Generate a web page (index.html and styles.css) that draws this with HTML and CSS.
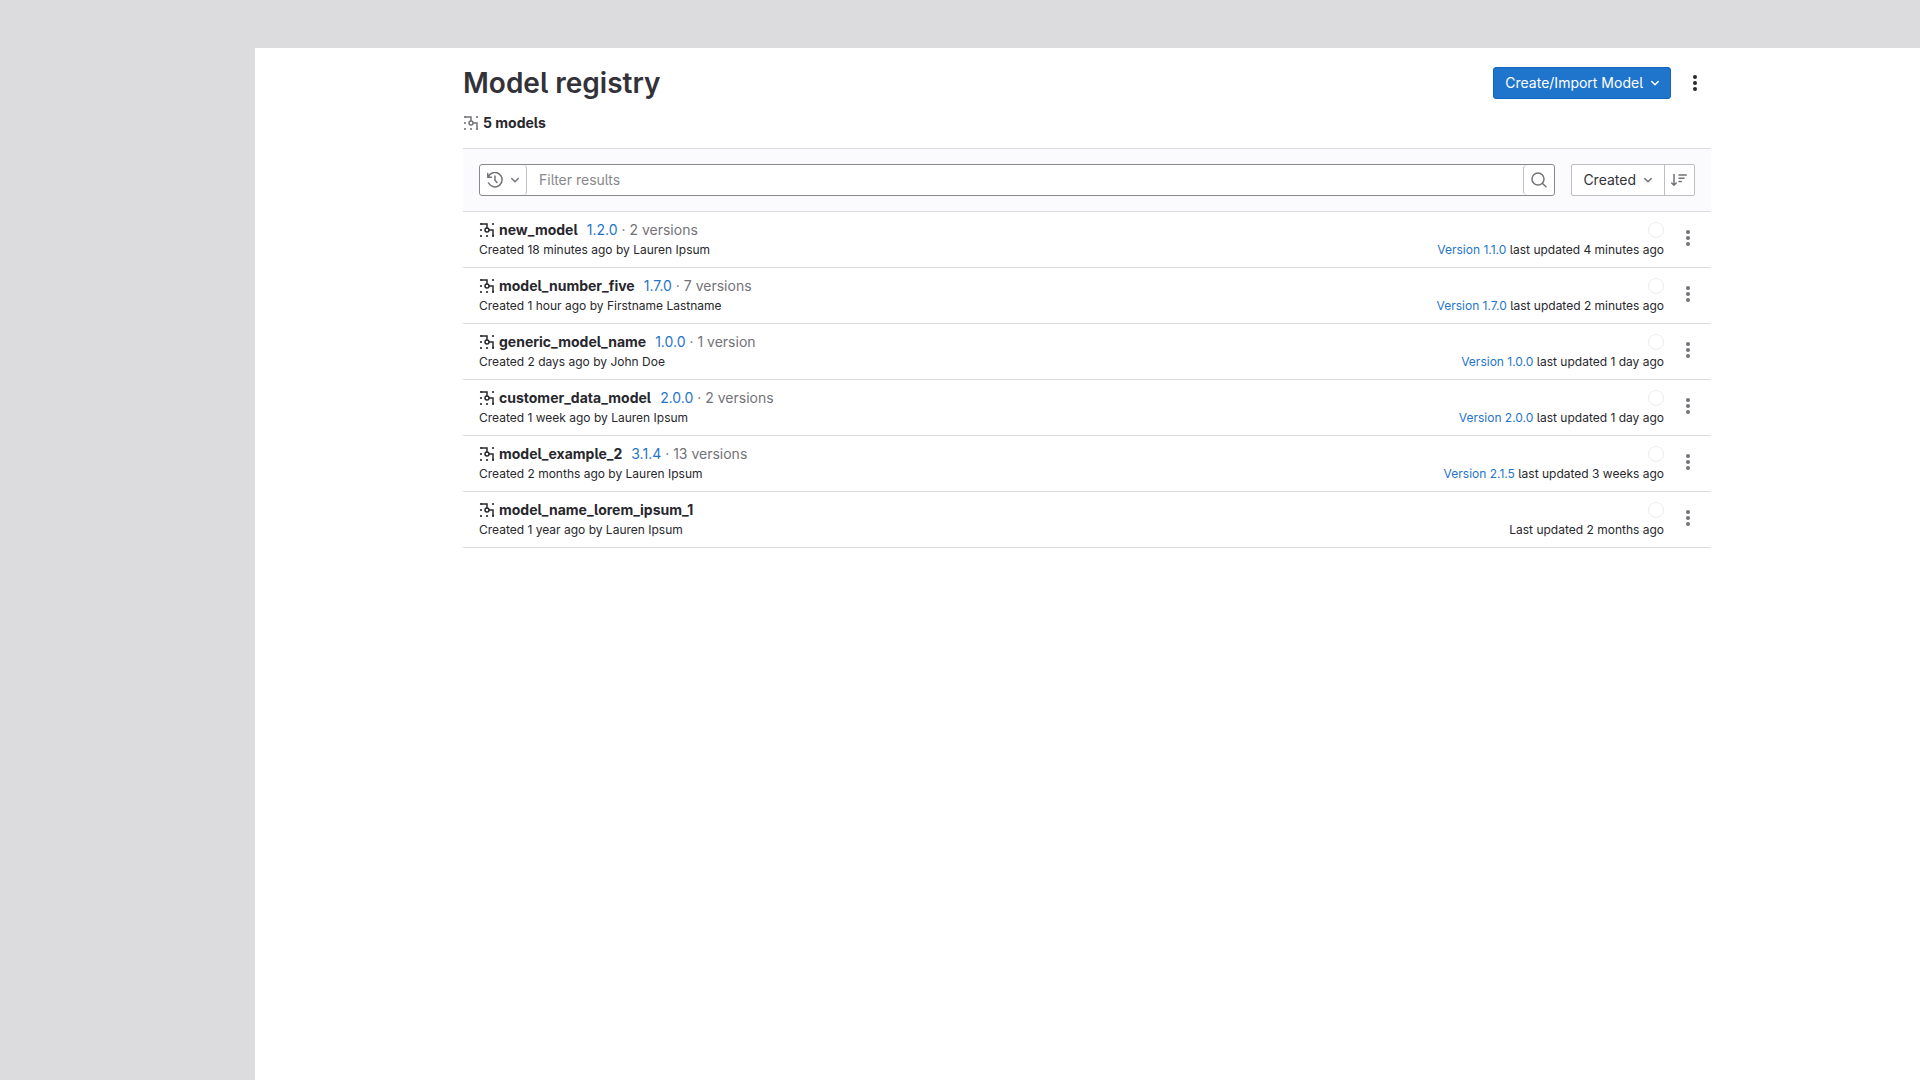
FILE: index.html
```html
<!DOCTYPE html>
<html lang="en">

<head>
    <meta charset="UTF-8">
    <meta name="viewport" content="width=device-width, initial-scale=1.0">
    <title>Model registry</title>
    <link rel="stylesheet" href="styles.css">
</head>

<body>
    <svg class="sprite" aria-hidden="true">
        <symbol id="model" viewBox="0 0 16 16">
            <path d="M2 1.9h6V6M10 8h4v6" fill="none" stroke="currentColor" stroke-width="1.5" />
            <circle cx="8" cy="8" r="2" fill="none" stroke="currentColor" stroke-width="1.5" />
            <g fill="currentColor">
                <circle cx="2" cy="2" r="1.1" />
                <circle cx="14" cy="2" r="1.1" />
                <circle cx="2" cy="8" r="1.1" />
                <circle cx="2" cy="14" r="1.1" />
                <circle cx="8" cy="14" r="1.1" />
                <circle cx="14" cy="14" r="1.1" />
            </g>
        </symbol>
        <symbol id="chevron" viewBox="0 0 16 16">
            <path d="M4.75 6.5 8 9.75l3.25-3.25" fill="none" stroke="currentColor" stroke-width="1.5" stroke-linecap="round" stroke-linejoin="round" />
        </symbol>
        <symbol id="dots" viewBox="0 0 16 16">
            <g fill="currentColor">
                <circle cx="8" cy="2" r="2" />
                <circle cx="8" cy="8" r="2" />
                <circle cx="8" cy="14" r="2" />
            </g>
        </symbol>
        <symbol id="history" viewBox="0 0 16 16">
            <path d="M.75 1.5v3.75H4.5M1.2 5A7.2 7.2 0 1 1 1.5 11M8 4v4.2l2 2.3" fill="none" stroke="currentColor" stroke-width="1.5" stroke-linecap="round" stroke-linejoin="round" />
        </symbol>
        <symbol id="search" viewBox="0 0 16 16">
            <path d="M13 7A6 6 0 1 1 1 7a6 6 0 0 1 12 0zM11.5 11.5l3.5 3.25" fill="none" stroke="currentColor" stroke-width="1.5" stroke-linecap="round" />
        </symbol>
        <symbol id="sort" viewBox="0 0 16 16">
            <path d="M3 2.5v10.75M.75 11 3 13.25 5.25 11M8 3h7.25M8 6.25h5M8 9.5h2.25" fill="none" stroke="currentColor" stroke-width="1.5" stroke-linecap="round" stroke-linejoin="round" />
        </symbol>
    </svg>

    <div id="app">
        <main>
            <div class="container">
                <header class="title-bar">
                    <h1>Model registry</h1>
                    <button class="btn btn-confirm">Create/Import Model <svg class="icon"><use href="#chevron" /></svg></button>
                    <button class="more" aria-label="More actions"><svg class="icon"><use href="#dots" /></svg></button>
                </header>
                <p class="count"><svg class="icon"><use href="#model" /></svg>5 models</p>

                <div class="toolbar">
                    <form class="filter">
                        <button type="button" class="history" aria-label="Recent searches">
                            <svg class="icon"><use href="#history" /></svg>
                            <svg class="icon"><use href="#chevron" /></svg>
                        </button>
                        <input type="text" placeholder="Filter results" aria-label="Filter results">
                        <button type="button" class="search" aria-label="Search"><svg class="icon"><use href="#search" /></svg></button>
                    </form>
                    <div class="sorting">
                        <button class="sort-by">Created <svg class="icon"><use href="#chevron" /></svg></button>
                        <button class="sort-dir" aria-label="Sort direction"><svg class="icon"><use href="#sort" /></svg></button>
                    </div>
                </div>

                <ul class="models">
                    <li>
                        <div class="info">
                            <div class="name"><svg class="icon"><use href="#model" /></svg><b>new_model</b><span><a href="#">1.2.0</a> · 2 versions</span></div>
                            <div class="meta">Created 18 minutes ago by Lauren Ipsum</div>
                        </div>
                        <div class="updated">
                            <span class="avatar"></span>
                            <div class="meta"><a href="#">Version 1.1.0</a> last updated 4 minutes ago</div>
                        </div>
                        <button class="row-more" aria-label="Actions"><svg class="icon"><use href="#dots" /></svg></button>
                    </li>
                    <li>
                        <div class="info">
                            <div class="name"><svg class="icon"><use href="#model" /></svg><b>model_number_five</b><span><a href="#">1.7.0</a> · 7 versions</span></div>
                            <div class="meta">Created 1 hour ago by Firstname Lastname</div>
                        </div>
                        <div class="updated">
                            <span class="avatar"></span>
                            <div class="meta"><a href="#">Version 1.7.0</a> last updated 2 minutes ago</div>
                        </div>
                        <button class="row-more" aria-label="Actions"><svg class="icon"><use href="#dots" /></svg></button>
                    </li>
                    <li>
                        <div class="info">
                            <div class="name"><svg class="icon"><use href="#model" /></svg><b>generic_model_name</b><span><a href="#">1.0.0</a> · 1 version</span></div>
                            <div class="meta">Created 2 days ago by John Doe</div>
                        </div>
                        <div class="updated">
                            <span class="avatar"></span>
                            <div class="meta"><a href="#">Version 1.0.0</a> last updated 1 day ago</div>
                        </div>
                        <button class="row-more" aria-label="Actions"><svg class="icon"><use href="#dots" /></svg></button>
                    </li>
                    <li>
                        <div class="info">
                            <div class="name"><svg class="icon"><use href="#model" /></svg><b>customer_data_model</b><span><a href="#">2.0.0</a> · 2 versions</span></div>
                            <div class="meta">Created 1 week ago by Lauren Ipsum</div>
                        </div>
                        <div class="updated">
                            <span class="avatar"></span>
                            <div class="meta"><a href="#">Version 2.0.0</a> last updated 1 day ago</div>
                        </div>
                        <button class="row-more" aria-label="Actions"><svg class="icon"><use href="#dots" /></svg></button>
                    </li>
                    <li>
                        <div class="info">
                            <div class="name"><svg class="icon"><use href="#model" /></svg><b>model_example_2</b><span><a href="#">3.1.4</a> · 13 versions</span></div>
                            <div class="meta">Created 2 months ago by Lauren Ipsum</div>
                        </div>
                        <div class="updated">
                            <span class="avatar"></span>
                            <div class="meta"><a href="#">Version 2.1.5</a> last updated 3 weeks ago</div>
                        </div>
                        <button class="row-more" aria-label="Actions"><svg class="icon"><use href="#dots" /></svg></button>
                    </li>
                    <li>
                        <div class="info">
                            <div class="name"><svg class="icon"><use href="#model" /></svg><b>model_name_lorem_ipsum_1</b></div>
                            <div class="meta">Created 1 year ago by Lauren Ipsum</div>
                        </div>
                        <div class="updated">
                            <span class="avatar"></span>
                            <div class="meta">Last updated 2 months ago</div>
                        </div>
                        <button class="row-more" aria-label="Actions"><svg class="icon"><use href="#dots" /></svg></button>
                    </li>
                </ul>
            </div>
        </main>
    </div>
</body>

</html>
```
FILE: styles.css
```css
* {
    margin: 0;
    padding: 0;
    box-sizing: border-box;
}

body {
    font: 14px/20px Inter, "Liberation Sans", sans-serif;
    font-feature-settings: "cv05";
    color: #28272d;
    background-color: #dcdcde;
}

button,
input {
    font: inherit;
    font-feature-settings: inherit;
    color: inherit;
    border: 0;
    background: none;
}

button {
    cursor: pointer;
}

a {
    color: #1f75cb;
    text-decoration: none;
}

li {
    list-style: none;
}

.sprite {
    display: none;
}

.icon {
    display: block;
    flex: none;
    width: 16px;
    height: 16px;
}

/* space for the top bar and the sidebar */
#app {
    display: flex;
    min-height: 100vh;
    padding: 48px 0 0 255px;
}

main {
    flex: 1;
    padding: 19px 17px 32px 16px;
    background-color: #fff;
}

.container {
    max-width: 1248px;
    margin: 0 auto;
}

.title-bar {
    display: flex;
    align-items: center;
    gap: 8px;
}

h1 {
    flex: 1;
    font-size: 28px;
    line-height: 32px;
    font-weight: 600;
    color: #333238;
}

.btn {
    display: flex;
    align-items: center;
    gap: 4px;
    height: 32px;
    padding: 0 8px 0 12px;
    border-radius: 4px;
}

.btn-confirm {
    color: #fff;
    background-color: #1f75cb;
    box-shadow: inset 0 0 0 1px #1068bf;
}

.more {
    display: flex;
    align-items: center;
    justify-content: center;
    width: 32px;
    height: 32px;
}

.count {
    display: flex;
    align-items: center;
    gap: 4px;
    margin: 14px 0 15px;
    font-weight: 700;
}

.count .icon {
    color: #737278;
}

.toolbar {
    display: flex;
    gap: 16px;
    padding: 15px 16px;
    border-top: 1px solid #dcdcde;
    background-color: #fbfafd;
}

.filter {
    display: flex;
    flex: 1;
    height: 32px;
    border: 1px solid #89888d;
    border-radius: 3px;
    background-color: #fff;
}

.filter input {
    flex: 1;
    min-width: 0;
    padding: 0 12px;
}

.filter input::placeholder {
    color: #89888d;
}

.history,
.search {
    display: flex;
    align-items: center;
    justify-content: center;
    color: #737278;
}

.history {
    gap: 4px;
    width: 47px;
    padding-left: 3px;
    border-right: 1px solid #bfbfc3;
    border-radius: 0 4px 4px 0;
}

.search {
    width: 31px;
    border-left: 1px solid #bfbfc3;
    border-radius: 4px 0 0 4px;
}

.sorting {
    display: flex;
    height: 32px;
    border: 1px solid #bfbfc3;
    border-radius: 2px;
    background-color: #fff;
}

.sort-by,
.sort-dir {
    display: flex;
    align-items: center;
    gap: 4px;
}

.sort-by {
    padding: 0 8px 0 11px;
    color: #333238;
}

.sort-by .icon,
.sort-dir .icon {
    color: #737278;
}

.sort-dir {
    padding: 0 7px 0 6px;
    border-left: 1px solid #bfbfc3;
}

.models {
    border-top: 1px solid #dcdcde;
}

.models li {
    display: flex;
    align-items: flex-start;
    gap: 16px;
    padding: 8px 15px 7px 16px;
    border-bottom: 1px solid #dcdcde;
}

.info {
    flex: 1;
}

.name {
    display: flex;
    align-items: center;
    gap: 4px;
    color: #737278;
}

.name .icon,
.name b {
    color: #28272d;
}

.name b {
    font-weight: 700;
}

.name span {
    margin-left: 5px;
}

.meta {
    font-size: 12px;
}

.updated {
    display: flex;
    flex-direction: column;
    align-items: flex-end;
}

.avatar {
    width: 16px;
    height: 16px;
    margin: 2px 0;
    border: 1px solid #ececef;
    border-radius: 50%;
}

.row-more {
    margin-top: 10px;
    color: #737278;
}
```
